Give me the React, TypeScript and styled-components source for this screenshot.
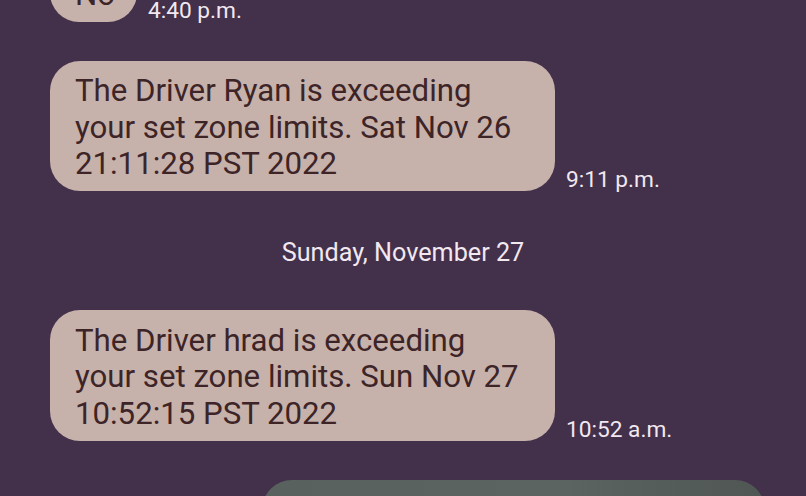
import React from "react"
import styled, { createGlobalStyle } from "styled-components"

const GlobalStyle = createGlobalStyle`
  html, body {
    margin: 0;
    padding: 0;
    background: #43304a;
  }
  body {
    font-family: Roboto, "Noto Sans", "Liberation Sans", sans-serif;
  }
`

type Msg =
  | { kind: "text"; text: string; time: string }
  | { kind: "date"; label: string }
  | { kind: "photo" }

const messages: Msg[] = [
  { kind: "text", text: "No", time: "4:40 p.m." },
  {
    kind: "text",
    text: "The Driver Ryan is exceeding your set zone limits. Sat Nov 26 21:11:28 PST 2022",
    time: "9:11 p.m.",
  },
  { kind: "date", label: "Sunday, November 27" },
  {
    kind: "text",
    text: "The Driver hrad is exceeding your set zone limits. Sun Nov 27 10:52:15 PST 2022",
    time: "10:52 a.m.",
  },
  { kind: "photo" },
]

const App = () => {
  return (
    <>
      <GlobalStyle />
      <Screen>
        <Feed>
          {messages.map((m, i) => {
            if (m.kind === "date") return <DateLabel key={i}>{m.label}</DateLabel>
            if (m.kind === "photo")
              return (
                <PhotoRow key={i}>
                  <Photo />
                </PhotoRow>
              )
            return (
              <Row key={i}>
                <Bubble $short={m.text.length < 10}>{m.text}</Bubble>
                <Stamp>{m.time}</Stamp>
              </Row>
            )
          })}
        </Feed>
      </Screen>
    </>
  )
}

export default App

const Screen = styled.div`
  width: 806px;
  height: 496px;
  overflow: hidden;
  background: #43304a;
`

const Feed = styled.div`
  display: flex;
  flex-direction: column;
  gap: 39px;
  /* scrolled: first bubble is cut off by the top edge */
  margin-top: -36px;
`

const Row = styled.div`
  display: flex;
  align-items: flex-end;
  padding-left: 50px;
`

const Bubble = styled.div<{ $short?: boolean }>`
  box-sizing: border-box;
  width: ${(p) => (p.$short ? "87px" : "505px")};
  padding: 12.5px 30px 8.5px 25px;
  border-radius: 30px;
  background: #c7b1ab;
  color: #3c2427;
  font-size: 31.2px;
  line-height: 36.5px;
`

const Stamp = styled.div`
  margin-left: 11px;
  margin-bottom: -2px;
  color: #f1e8f0;
  font-size: 22.7px;
  line-height: 26px;
  white-space: nowrap;
`

const DateLabel = styled.div`
  text-align: center;
  color: #f1e8f0;
  font-size: 25.2px;
  line-height: 30px;
  margin: 8px 0 3px;
`

const PhotoRow = styled.div`
  display: flex;
  justify-content: flex-end;
  padding-right: 41px;
`

const Photo = styled.div`
  width: 503px;
  height: 220px;
  border-radius: 30px;
  background: linear-gradient(90deg, #58615d 0%, #5b6460 60%, #4f5653 100%);
`
